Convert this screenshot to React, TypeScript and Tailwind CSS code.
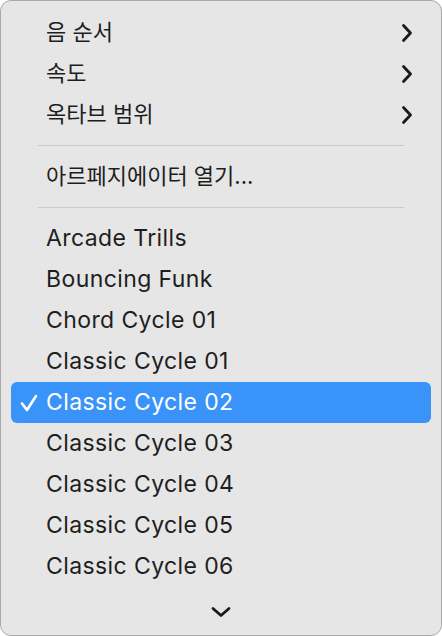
const submenus = ['음 순서', '속도', '옥타브 범위'];
const presets = [
  'Arcade Trills',
  'Bouncing Funk',
  'Chord Cycle 01',
  'Classic Cycle 01',
  'Classic Cycle 02',
  'Classic Cycle 03',
  'Classic Cycle 04',
  'Classic Cycle 05',
  'Classic Cycle 06',
];
const selected = 'Classic Cycle 02';

function Arrow() {
  return (
    <svg width="12" height="20" viewBox="0 0 12 20" fill="none" stroke="#1a1a1a" strokeWidth="2.8" strokeLinecap="round" strokeLinejoin="round">
      <path d="M2.5 2.5 L9.5 10 L2.5 17.5" />
    </svg>
  );
}

function Tick() {
  return (
    <svg width="18" height="20" viewBox="0 0 18 20" fill="none" stroke="white" strokeWidth="2.6" strokeLinecap="round" strokeLinejoin="round">
      <path d="M2 10.5 L7 17 L16 3" />
    </svg>
  );
}

function Separator() {
  return (
    <div className="py-[10px] px-[27px]">
      <div className="h-px bg-[#c9c9c9]" />
    </div>
  );
}

export default function App() {
  return (
    <div className="w-[442px] h-[636px] bg-white">
      <div
        className="w-full h-full bg-[#e6e6e6] border border-[#a9a9a9] rounded-[11px] pt-[11px] px-[10px] flex flex-col text-[23px] tracking-[0.4px] text-[#1e1e1e]"
        style={{ fontFamily: 'Inter, "Noto Sans CJK KR", sans-serif' }}
      >
        {submenus.map((label) => (
          <div key={label} className="h-[41px] flex items-center pl-[35px] pr-[18px]">
            <span className="flex-1 tracking-normal text-[22px]">{label}</span>
            <Arrow />
          </div>
        ))}
        <Separator />
        <div className="h-[41px] flex items-center pl-[35px] tracking-normal text-[22px]">아르페지에이터 열기...</div>
        <Separator />
        {presets.map((name) => {
          const active = name === selected;
          return (
            <div
              key={name}
              className={
                active
                  ? 'h-[41px] flex items-center rounded-[6px] bg-[#3a93f8] text-white'
                  : 'h-[41px] flex items-center'
              }
            >
              <span className="w-[35px] flex pl-[9px]">{active && <Tick />}</span>
              <span>{name}</span>
            </div>
          );
        })}
        <div className="flex-1 flex items-center justify-center pt-[2px]">
          <svg width="20" height="12" viewBox="0 0 20 12" fill="none" stroke="#1a1a1a" strokeWidth="2.8" strokeLinecap="round" strokeLinejoin="round">
            <path d="M2 2.5 L10 9.5 L18 2.5" />
          </svg>
        </div>
      </div>
    </div>
  );
}
